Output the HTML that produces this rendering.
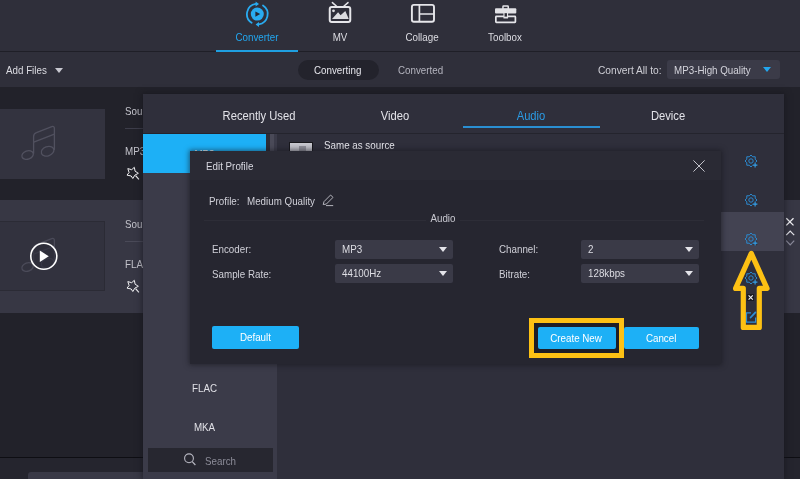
<!DOCTYPE html>
<html lang="en">
<head>
<meta charset="utf-8">
<title>Converter - Edit Profile</title>
<style>
*{box-sizing:border-box;margin:0;padding:0}
html,body{width:800px;height:479px;overflow:hidden;background:#22222a}
body{position:relative;will-change:transform;font-family:"Liberation Sans",sans-serif;font-size:11px;color:#d6d6dc;-webkit-font-smoothing:antialiased}
.abs{position:absolute}
.t{position:absolute;white-space:nowrap;line-height:14px;transform:scaleX(.89);transform-origin:0 50%}
.t.c{transform-origin:50% 50%}
/* header */
#header{left:0;top:0;width:800px;height:51px;background:#2f2f3a}
#hline{left:0;top:51px;width:800px;height:1px;background:#1f1f27}
#toolbar{left:0;top:52px;width:800px;height:35px;background:#2f2f3a}
.nav{position:absolute;top:31px;width:80px;text-align:center;font-size:11px;line-height:12px;color:#dcdce2;transform:scaleX(.89)}
.nav.on{color:#22a7f0}
#navline{left:216px;top:49.5px;width:82px;height:2px;background:#1f9fe0}
/* toolbar */
#pill{left:298px;top:59.5px;width:80.5px;height:20.5px;border-radius:10.25px;background:#23232c}
#sel{left:667px;top:59.5px;width:113px;height:19.5px;border-radius:3px;background:#3b3b48}
/* rows */
#row2{left:0;top:200px;width:800px;height:113px;background:#373744}
.thumb{left:0;width:105px;height:70px;background:#33333f}
#foot{left:0;top:458px;width:800px;height:21px;background:#25252e}
#footline{left:0;top:456.6px;width:800px;height:1.4px;background:#0e0e13}
/* panel */
#panel{left:143px;top:94px;width:641px;height:385px;background:#2d2d38;box-shadow:0 0 6px 1px rgba(20,20,26,.6)}
#tabs{left:0;top:0;width:641px;height:40px;background:#2f2f3b;border-bottom:1px solid #24242d}
.tab{position:absolute;top:15px;width:136px;text-align:center;font-size:12.3px;line-height:14px;color:#e2e2e8;transform:scaleX(.91)}
#side{left:0;top:40px;width:134px;height:345px;background:#3b3b49}
#sideSel{left:0;top:0;width:123px;height:39px;background:#1db0f6}
#sthumb{left:127px;top:0;width:4px;height:120px;background:#4a4a58}
#content{left:134px;top:40px;width:507px;height:345px;background:#2f2f3b}
#hi{left:578px;top:118px;width:63px;height:39px;background:#434352}
#search{left:5px;top:314px;width:125px;height:24px;background:#272730}
/* dialog */
#dlg{left:190px;top:151.4px;width:531px;height:213px;background:#262630;box-shadow:0 0 5px 1px rgba(18,18,24,.55)}
#dtitle{left:0;top:0;width:531px;height:28.6px;background:#2a2a34}
.lbl{font-size:11px;color:#d0d0d8}
.dd{position:absolute;height:19px;width:118px;background:#3a3a47;border-radius:2px}
.dd span{position:absolute;left:7px;top:3px;font-size:11px;line-height:13px;color:#dedee4;transform:scaleX(.89);transform-origin:0 50%;white-space:nowrap}
.dd i{position:absolute;right:6px;top:7px;width:0;height:0;border-left:4.5px solid transparent;border-right:4.5px solid transparent;border-top:5px solid #e4e4ea}
.btn{position:absolute;height:22px;background:#1db0f6;border-radius:2px;color:#fff;font-size:11px;line-height:22px;text-align:center}
.btn span{display:inline-block;transform:scaleX(.89)}
</style>
</head>
<body>
<!-- base app -->
<div class="abs" id="header"></div>
<div class="abs" id="hline"></div>
<div class="abs" id="toolbar"></div>

<div class="nav on" style="left:217px">Converter</div>
<div class="nav" style="left:300px">MV</div>
<div class="nav" style="left:382px">Collage</div>
<div class="nav" style="left:465px">Toolbox</div>
<div class="abs" id="navline"></div>

<div class="t" style="left:6px;top:63px;font-size:11px;color:#dcdce2">Add Files</div>
<div class="abs" style="left:55px;top:68px;width:0;height:0;border-left:4.5px solid transparent;border-right:4.5px solid transparent;border-top:5px solid #c8c8d0"></div>
<div class="abs" id="pill"></div>
<div class="t" style="left:314px;top:63px;font-size:11px;color:#e6e6ec">Converting</div>
<div class="t" style="left:398px;top:63px;font-size:11px;color:#b4b4be">Converted</div>
<div class="t" style="left:598px;top:63px;font-size:11px;color:#cfcfd6;transform:scaleX(.928)">Convert All to:</div>
<div class="abs" id="sel"></div>
<div class="t" style="left:674px;top:63px;font-size:11px;color:#d4d4dc">MP3-High Quality</div>
<div class="abs" style="left:763px;top:67px;width:0;height:0;border-left:4.5px solid transparent;border-right:4.5px solid transparent;border-top:5px solid #22a7f0"></div>

<div class="abs" id="row2"></div>
<div class="abs thumb" style="top:109px"></div>
<div class="abs thumb" style="top:221px;background:#32323e;border:1px solid #2b2b35;border-left:0"></div>
<div class="t lbl" style="left:125px;top:104px;color:#c4c4cc">Source</div>
<div class="abs" style="left:125px;top:128px;width:30px;height:1px;background:#3d3d4a"></div>
<div class="t lbl" style="left:125px;top:144px;color:#c4c4cc">MP3</div>
<div class="t lbl" style="left:125px;top:217px;color:#c4c4cc">Source</div>
<div class="abs" style="left:125px;top:241px;width:30px;height:1px;background:#4a4a58"></div>
<div class="t lbl" style="left:125px;top:257px;color:#c4c4cc">FLAC</div>
<div class="abs" id="footline"></div>
<div class="abs" id="foot"></div>
<div class="abs" style="left:28px;top:471.6px;width:120px;height:8px;background:#393946;border-radius:3px 0 0 0"></div>


<!-- nav icons -->
<svg class="abs" style="left:243px;top:0" width="28" height="28" viewBox="0 0 28 28">
  <circle cx="14.3" cy="14.1" r="6.5" fill="#29abf0"/>
  <path d="M12.4 11.4V16.8L17.2 14.1Z" fill="#262631"/>
  <path d="M8.6 22.7A10.3 10.3 0 0 1 12.8 3.9" fill="none" stroke="#29abf0" stroke-width="1.8" stroke-linecap="round"/>
  <path d="M12.6 1.4L16 3.9L12.6 6.4Z" fill="#29abf0"/>
  <path d="M20 5.5A10.3 10.3 0 0 1 15.8 24.3" fill="none" stroke="#29abf0" stroke-width="1.8" stroke-linecap="round"/>
  <path d="M16 21.9L12.6 24.4L16 26.9Z" fill="#29abf0"/>
</svg>
<svg class="abs" style="left:320px;top:0" width="40" height="30" viewBox="0 0 40 30">
  <rect x="9.75" y="6.9" width="20.5" height="15" rx="2" fill="none" stroke="#e6e6ea" stroke-width="2"/>
  <path d="M12.4 2.6L16.6 6.3M28 2.6L23.8 6.3" stroke="#e6e6ea" stroke-width="1.5" stroke-linecap="round"/>
  <path d="M12 18.9L18.1 12.2L20.6 15.3L25.3 10.9L28.8 18.9Z" fill="#dcdce0"/>
  <circle cx="13.5" cy="10.8" r="1.4" fill="#dcdce0"/>
</svg>
<svg class="abs" style="left:400px;top:0" width="40" height="30" viewBox="0 0 40 30">
  <rect x="11.9" y="4.9" width="22.1" height="16.8" rx="2" fill="none" stroke="#e6e6ea" stroke-width="1.9"/>
  <path d="M19.4 4.9V21.7M19.4 14H34" stroke="#e6e6ea" stroke-width="1.7" fill="none"/>
</svg>
<svg class="abs" style="left:485px;top:0" width="40" height="30" viewBox="0 0 40 30">
  <rect x="17.95" y="6.05" width="5.3" height="3.4" rx="0.6" fill="none" stroke="#e6e6ea" stroke-width="1.5"/>
  <rect x="10" y="8.2" width="21.3" height="5.3" rx="1" fill="#e2e2e6"/>
  <rect x="10.85" y="16.4" width="19.55" height="6" rx="0.6" fill="none" stroke="#e6e6ea" stroke-width="1.7"/>
  <rect x="18.4" y="12.5" width="4.7" height="6" rx="0.6" fill="#e2e2e6"/>
  <rect x="19.55" y="13.2" width="2.4" height="3.4" fill="#2a2a34"/>
</svg>
<!-- thumbs icons -->
<svg class="abs" style="left:15px;top:120px" width="50" height="45" viewBox="15 120 50 45" id="note1">
  <g fill="none" stroke="#51515f" stroke-width="1.3" stroke-linecap="round" stroke-linejoin="round">
    <ellipse cx="27.6" cy="155" rx="5.9" ry="4.2" transform="rotate(-20 27.6 155)"/>
    <ellipse cx="47.6" cy="151.2" rx="6.5" ry="4.6" transform="rotate(-20 47.6 151.2)"/>
    <path d="M33.6 153.2V136.5Q33.6 133.6 36.4 132.6L51.8 126.6Q54.4 125.8 54.4 128.6V149.4"/>
    <path d="M33.8 142.2L54.4 134.2"/>
  </g>
</svg>
<svg class="abs" style="left:15px;top:232px" width="50" height="45" viewBox="15 120 50 45">
  <g fill="none" stroke="#4b4b59" stroke-width="1.3" stroke-linecap="round" stroke-linejoin="round">
    <ellipse cx="27.6" cy="155" rx="5.9" ry="4.2" transform="rotate(-20 27.6 155)"/>
    <ellipse cx="47.6" cy="151.2" rx="6.5" ry="4.6" transform="rotate(-20 47.6 151.2)"/>
    <path d="M33.6 153.2V136.5Q33.6 133.6 36.4 132.6L51.8 126.6Q54.4 125.8 54.4 128.6V149.4"/>
    <path d="M33.8 142.2L54.4 134.2"/>
  </g>
</svg>
<svg class="abs" style="left:28px;top:241px" width="32" height="32" viewBox="0 0 32 32">
  <circle cx="15.8" cy="15.3" r="13" fill="rgba(44,44,56,.62)" stroke="#ffffff" stroke-width="1.6"/>
  <path d="M11.8 9.6V21L20.8 15.3Z" fill="#ffffff"/>
</svg>
<svg class="abs" style="left:124px;top:164px" width="18" height="18" viewBox="124 164 18 18" >
  <path d="M134.3 167.3L135.1 171.2L138.4 173.3L134.9 175.1L132.8 178.5L131.2 176L127 175.1L129.1 172.5L127.8 168.6L131.7 169.7Z" fill="none" stroke="#f2f2f4" stroke-width="1" stroke-linejoin="miter"/>
  <path d="M135.6 175.6L138.9 179.3" stroke="#f2f2f4" stroke-width="1.2"/>
</svg>
<svg class="abs" style="left:124px;top:277px" width="18" height="18" viewBox="124 164 18 18" >
  <path d="M134.3 167.3L135.1 171.2L138.4 173.3L134.9 175.1L132.8 178.5L131.2 176L127 175.1L129.1 172.5L127.8 168.6L131.7 169.7Z" fill="none" stroke="#f2f2f4" stroke-width="1" stroke-linejoin="miter"/>
  <path d="M135.6 175.6L138.9 179.3" stroke="#f2f2f4" stroke-width="1.2"/>
</svg>
<!-- right strip icons -->
<svg class="abs" style="left:784px;top:214px" width="16" height="36" viewBox="784 214 16 36">
  <path d="M786.3 218.2L793.5 225.4M793.5 218.2L786.3 225.4" stroke="#f0f0f4" stroke-width="1.3"/>
  <path d="M786.2 235.2L790.2 231L794.2 235.2" fill="none" stroke="#e4e4ea" stroke-width="1.2"/>
  <path d="M786.2 240.6L790.2 244.8L794.2 240.6" fill="none" stroke="#8a8a9a" stroke-width="1.2"/>
</svg>

<!-- format panel -->
<div class="abs" id="panel">
  <div class="abs" id="content"></div>
  <div class="abs" id="tabs">
    <div class="tab" style="left:48px">Recently Used</div>
    <div class="tab" style="left:184px">Video</div>
    <div class="tab" style="left:320px;color:#2b9be4">Audio</div>
    <div class="tab" style="left:457px">Device</div>
    <div class="abs" style="left:320px;top:32px;width:137px;height:2px;background:#2a8fd2"></div>
  </div>
  <div class="abs" id="side">
    <div class="abs" id="sideSel"></div>
    <div class="t c" style="left:0;width:123px;text-align:center;top:13px;font-size:11px;color:#fff">MP3</div>
    <div class="abs" id="sthumb"></div>
    <div class="abs" style="left:123px;top:0;width:3.5px;height:39px;background:#2d2d37"></div>
    <div class="t c" style="left:0;width:123px;text-align:center;top:247px;font-size:11px;color:#e0e0e6">FLAC</div>
    <div class="t c" style="left:0;width:123px;text-align:center;top:286px;font-size:11px;color:#e0e0e6">MKA</div>
    <div class="abs" id="search"></div>
    <div class="t" style="left:62px;top:320px;font-size:11px;color:#8c8c98">Search</div>
  </div>
  <div class="abs" id="hi"></div>
<svg class="abs" style="left:599.8px;top:58.5px" width="18" height="18" viewBox="-8 -8 18 18"><path d="M0.00 -6.00 L1.72 -4.16 L4.24 -4.24 L4.16 -1.72 L6.00 0.00 L4.16 1.72 L4.24 4.24 L1.72 4.16 L0.00 6.00 L-1.72 4.16 L-4.24 4.24 L-4.16 1.72 L-6.00 0.00 L-4.16 -1.72 L-4.24 -4.24 L-1.72 -4.16Z" fill="none" stroke="#2b8ad0" stroke-width="1" stroke-linejoin="round"/><circle cx="0" cy="0" r="2.2" fill="none" stroke="#2b8ad0" stroke-width="1"/><path d="M1.6 4.1H6.6M4.1 1.6V6.6" stroke="#2e2e3a" stroke-width="2.6"/><path d="M1.8 4.1H6.4M4.1 1.8V6.4" stroke="#35a0e8" stroke-width="1.1"/></svg>
<svg class="abs" style="left:599.8px;top:97.5px" width="18" height="18" viewBox="-8 -8 18 18"><path d="M0.00 -6.00 L1.72 -4.16 L4.24 -4.24 L4.16 -1.72 L6.00 0.00 L4.16 1.72 L4.24 4.24 L1.72 4.16 L0.00 6.00 L-1.72 4.16 L-4.24 4.24 L-4.16 1.72 L-6.00 0.00 L-4.16 -1.72 L-4.24 -4.24 L-1.72 -4.16Z" fill="none" stroke="#2b8ad0" stroke-width="1" stroke-linejoin="round"/><circle cx="0" cy="0" r="2.2" fill="none" stroke="#2b8ad0" stroke-width="1"/><path d="M1.6 4.1H6.6M4.1 1.6V6.6" stroke="#2e2e3a" stroke-width="2.6"/><path d="M1.8 4.1H6.4M4.1 1.8V6.4" stroke="#35a0e8" stroke-width="1.1"/></svg>
<svg class="abs" style="left:599.8px;top:136.5px" width="18" height="18" viewBox="-8 -8 18 18"><path d="M0.00 -6.00 L1.72 -4.16 L4.24 -4.24 L4.16 -1.72 L6.00 0.00 L4.16 1.72 L4.24 4.24 L1.72 4.16 L0.00 6.00 L-1.72 4.16 L-4.24 4.24 L-4.16 1.72 L-6.00 0.00 L-4.16 -1.72 L-4.24 -4.24 L-1.72 -4.16Z" fill="none" stroke="#2b8ad0" stroke-width="1" stroke-linejoin="round"/><circle cx="0" cy="0" r="2.2" fill="none" stroke="#2b8ad0" stroke-width="1"/><path d="M1.6 4.1H6.6M4.1 1.6V6.6" stroke="#2e2e3a" stroke-width="2.6"/><path d="M1.8 4.1H6.4M4.1 1.8V6.4" stroke="#35a0e8" stroke-width="1.1"/></svg>
<svg class="abs" style="left:599.8px;top:175.5px" width="18" height="18" viewBox="-8 -8 18 18"><path d="M0.00 -6.00 L1.72 -4.16 L4.24 -4.24 L4.16 -1.72 L6.00 0.00 L4.16 1.72 L4.24 4.24 L1.72 4.16 L0.00 6.00 L-1.72 4.16 L-4.24 4.24 L-4.16 1.72 L-6.00 0.00 L-4.16 -1.72 L-4.24 -4.24 L-1.72 -4.16Z" fill="none" stroke="#2b8ad0" stroke-width="1" stroke-linejoin="round"/><circle cx="0" cy="0" r="2.2" fill="none" stroke="#2b8ad0" stroke-width="1"/><path d="M1.6 4.1H6.6M4.1 1.6V6.6" stroke="#2e2e3a" stroke-width="2.6"/><path d="M1.8 4.1H6.4M4.1 1.8V6.4" stroke="#35a0e8" stroke-width="1.1"/></svg>
<svg class="abs" style="left:40px;top:356px" width="14" height="16" viewBox="0 0 14 16"><circle cx="6" cy="8.3" r="4.4" fill="none" stroke="#b8b8c2" stroke-width="1.1"/><path d="M9.2 11.6L12.4 15" stroke="#b8b8c2" stroke-width="1.2"/></svg>
  <div class="t" style="left:181px;top:44px;font-size:11px;color:#e6e6ec">Same as source</div>
  <div class="abs" style="left:145.5px;top:47.5px;width:24.5px;height:14px;background:linear-gradient(#c9c9d0,#a9a9b2);border:1px solid #17171c"></div>
  <div class="abs" style="left:156px;top:52px;width:7px;height:8px;background:#8e8e98"></div>
</div>

<!-- dialog -->
<div class="abs" id="dlg">
  <div class="abs" id="dtitle"></div>
  <div class="abs" style="left:0;top:.6px;width:531px;height:212px">
  <div class="t" style="left:16px;top:7px;font-size:11px;color:#d8d8e0">Edit Profile</div>
  <svg class="abs" style="left:502px;top:7px" width="14" height="14" viewBox="0 0 14 14"><path d="M1.4 1.4L12.6 12.6M12.6 1.4L1.4 12.6" stroke="#c4c4cc" stroke-width="1"/></svg>
  <svg class="abs" style="left:131px;top:40px" width="14" height="16" viewBox="321 192 14 16"><path d="M323.2 204.6L324 201.6L330.6 195L333 197.4L326.4 204Z" fill="none" stroke="#b4b4bc" stroke-width="1" stroke-linejoin="round"/><path d="M326 205.6H333.2" stroke="#b4b4bc" stroke-width="1"/></svg>
  <div class="t" style="left:19px;top:42px;font-size:11px;color:#d0d0d8">Profile:</div>
  <div class="t" style="left:56.5px;top:42px;font-size:11px;color:#d0d0d8">Medium Quality</div>
  <div class="abs" style="left:14px;top:68px;width:500px;height:1px;background:#2d2d37"></div>
  <div class="t" style="left:236px;top:59px;padding:0 5px;background:#262630;font-size:11px;color:#c8c8d0">Audio</div>
  <div class="t lbl" style="left:22px;top:90px">Encoder:</div>
  <div class="t lbl" style="left:22px;top:115px">Sample Rate:</div>
  <div class="t lbl" style="left:309px;top:90px">Channel:</div>
  <div class="t lbl" style="left:309px;top:115px">Bitrate:</div>
  <div class="dd" style="left:145px;top:88px"><span>MP3</span><i></i></div>
  <div class="dd" style="left:145px;top:112px"><span>44100Hz</span><i></i></div>
  <div class="dd" style="left:391px;top:88px"><span>2</span><i></i></div>
  <div class="dd" style="left:391px;top:112px"><span>128kbps</span><i></i></div>
  <div class="btn" style="left:22px;top:174px;width:87px;height:23px;line-height:23px"><span>Default</span></div>
  <div class="abs" style="left:338.5px;top:166px;width:95.5px;height:40px;border:5px solid #fdc114;background:#1e1e26"></div>
  <div class="btn" style="left:347.5px;top:175px;width:78px"><span>Create New</span></div>
  <div class="btn" style="left:434px;top:175px;width:74.5px"><span>Cancel</span></div>
  </div>
</div>

<!-- overlay annotations -->
<div class="abs" style="left:747px;top:294px;width:7px;height:7px;background:#1b1b21"></div>
<svg class="abs" style="left:725px;top:240px" width="60" height="100" viewBox="725 240 60 100">
  <path d="M748.6 295.4L752.8 299.6M752.8 295.4L748.6 299.6" stroke="#f4f4f6" stroke-width="1.1"/>
  <path d="M751 312.9H746.5V322.2H755.6V317.4" fill="none" stroke="#2d8fd8" stroke-width="1.2"/>
  <path d="M750.6 317.5L755.4 312.4" stroke="#2d8fd8" stroke-width="1.8" stroke-linecap="round"/>
  <path d="M751.3 253.4L767 288.4L759.3 288.4L759.3 327.4L743.3 327.4L743.3 288.4L735.6 288.4Z" fill="none" stroke="#fdc114" stroke-width="5.2" stroke-linejoin="round"/>
</svg>
</body>
</html>
